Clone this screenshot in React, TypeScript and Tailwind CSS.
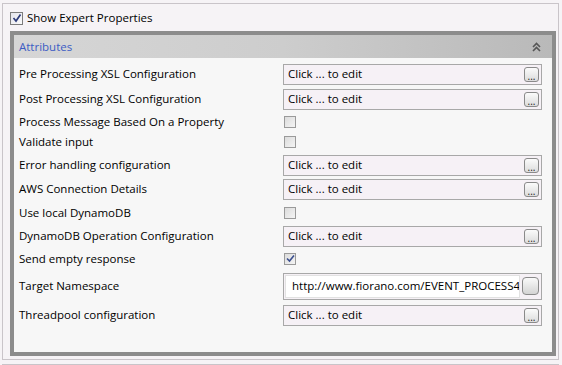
import { ReactNode } from 'react';

const font = { fontFamily: '"Open Sans", "DejaVu Sans", sans-serif' };

function Dots() {
  return (
    <div className="flex h-[15px] w-[15px] items-end justify-center rounded-[3px] border border-[#8a8a8a] bg-gradient-to-b from-[#fbfbfb] to-[#dcdcdc] pb-[1px] text-[10px] leading-[8px] text-[#222]">
      ...
    </div>
  );
}

function EditBox() {
  return (
    <div className="flex h-[21px] w-[259px] items-center justify-between border border-[#a8a8a8] bg-[#f6f1f6] pl-[4px] pr-[2px] text-[11.5px] text-black">
      <span>Click ... to edit</span>
      <Dots />
    </div>
  );
}

function Check({ checked = false }: { checked?: boolean }) {
  return (
    <div className="ml-[1px] flex h-[12px] w-[12px] items-center justify-center border border-[#9a9a9a] bg-gradient-to-br from-[#dcdcdc] to-[#f4f4f4]">
      {checked && (
        <svg width="9" height="9" viewBox="0 0 9 9">
          <path d="M1 4.5 L3.5 7 L8 1.5" stroke="#3b4f8e" strokeWidth="1.6" fill="none" />
        </svg>
      )}
    </div>
  );
}

function Row({ label, h, children }: { label: string; h: string; children: ReactNode }) {
  return (
    <div className={`flex items-center ${h}`}>
      <div className="w-[269px] pl-[5px] text-[11.5px] text-black">{label}</div>
      {children}
    </div>
  );
}

export default function App() {
  return (
    <div className="h-[365px] w-[562px] overflow-hidden bg-[#f6f3f6]" style={font}>
      <div className="ml-[2px] mt-[3px] h-[357px] w-[557px] border border-[#c9c4c9] bg-[#f6f3f6]">
        {/* expert toggle */}
        <div className="flex h-[26px] items-center pl-[7px] pt-[2px]">
          <div className="flex h-[13px] w-[13px] items-center justify-center border border-[#7c7c7c] bg-gradient-to-br from-[#e4e4ec] to-[#fafafa]">
            <svg width="10" height="10" viewBox="0 0 10 10">
              <path d="M1.5 5 L4 8 L8.5 1.5" stroke="#2d3b7a" strokeWidth="1.7" fill="none" />
            </svg>
          </div>
          <span className="ml-[4px] text-[11.5px] text-black">Show Expert Properties</span>
        </div>

        {/* attributes group */}
        <div className="ml-[7px] mt-[1px] h-[325px] w-[546px] border-4 border-[#8c8c8c] bg-[#f7f7f7]">
          <div className="flex h-[23px] items-center justify-between bg-gradient-to-r from-[#d6d6d6] via-[#cdcdcd] to-[#b9b9b9] pl-[5px] pr-[11px]">
            <span className="text-[11.5px] text-[#3c5cc4]">Attributes</span>
            <svg width="9" height="10" viewBox="0 0 9 10">
              <path d="M1 5 L4.5 1.5 L8 5 M1 9 L4.5 5.5 L8 9" stroke="#555" strokeWidth="1.6" fill="none" />
            </svg>
          </div>
          <div className="pt-[4px]">
            <Row label="Pre Processing XSL Configuration" h="h-[24px]"><EditBox /></Row>
            <Row label="Post Processing XSL Configuration" h="h-[26px]"><EditBox /></Row>
            <Row label="Process Message Based On a Property" h="h-[19px]"><Check /></Row>
            <Row label="Validate input" h="h-[21px]"><Check /></Row>
            <Row label="Error handling configuration" h="h-[26px]"><EditBox /></Row>
            <Row label="AWS Connection Details" h="h-[22px]"><EditBox /></Row>
            <Row label="Use local DynamoDB" h="h-[25px]"><Check /></Row>
            <Row label="DynamoDB Operation Configuration" h="h-[22px]"><EditBox /></Row>
            <Row label="Send empty response" h="h-[23px]"><Check checked /></Row>
            <Row label="Target Namespace" h="h-[32px]">
              <div className="flex h-[27px] w-[259px] items-center border border-[#a8a8a8] bg-[#f6f1f6] pl-[1px] pr-[2px]">
                <div className="flex h-[23px] w-[235px] items-center overflow-hidden whitespace-nowrap border border-[#e2e2e2] bg-white pl-[6px] text-[11.5px] text-black">
                  http://www.fiorano.com/EVENT_PROCESS4
                </div>
                <div className="ml-auto h-[18px] w-[17px] rounded-[4px] border border-[#8a8a8a] bg-gradient-to-b from-[#fafafa] to-[#d4d4d4]" />
              </div>
            </Row>
            <Row label="Threadpool configuration" h="h-[26px]"><EditBox /></Row>
          </div>
        </div>
      </div>
      <div className="ml-[2px] mt-[4px] h-[2px] w-[557px] border-t border-[#c9c4c9]" />
    </div>
  );
}
